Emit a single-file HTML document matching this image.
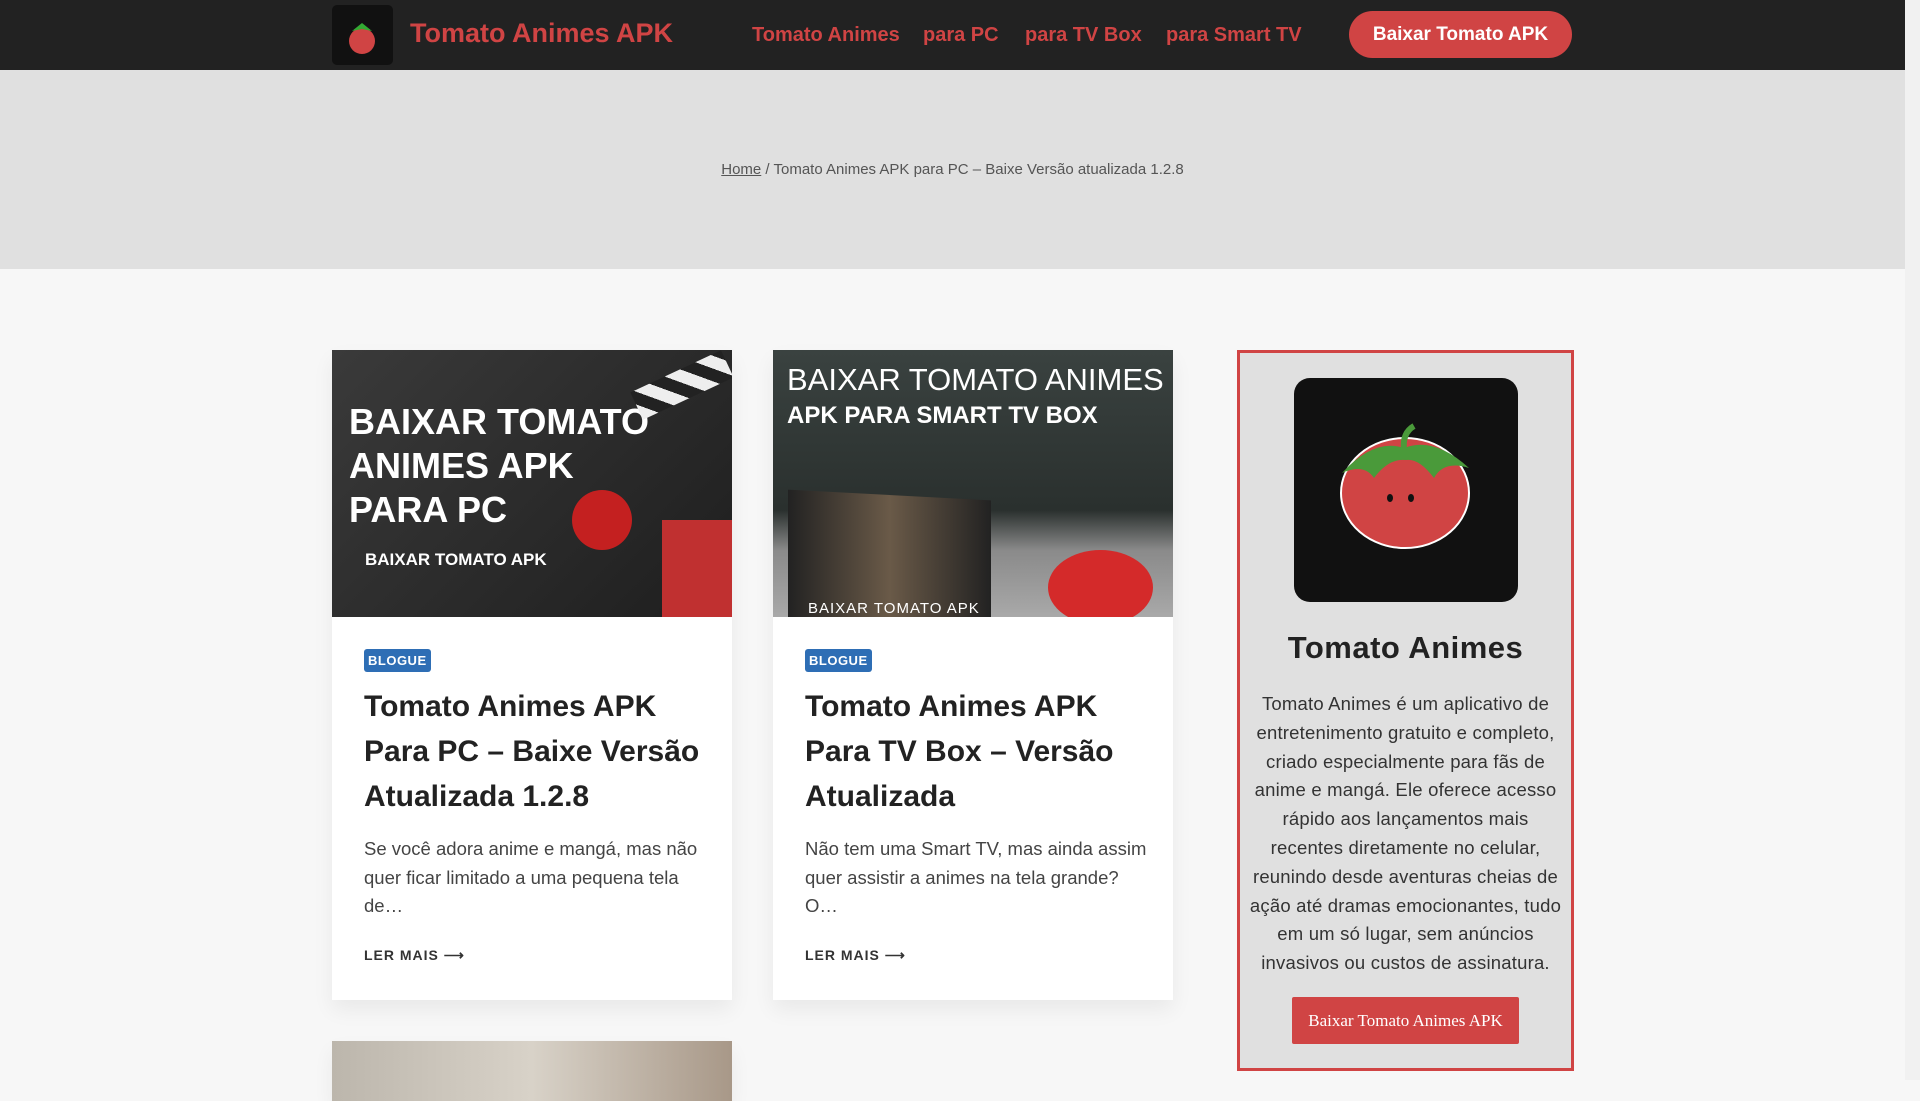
<!DOCTYPE html>
<html><head><meta charset="utf-8"><style>
*{margin:0;padding:0;box-sizing:border-box}
body{width:1920px;height:1080px;overflow:hidden;background:#f7f7f7;font-family:"Liberation Sans",sans-serif;position:relative}
.hdr{position:absolute;left:0;top:0;width:1905px;height:70px;background:#222}
.logo{position:absolute;left:332px;top:5px;width:61px;height:60px;background:#111;border-radius:5px}
.brand{position:absolute;left:410px;top:18px;color:#d04444;font-size:27px;font-weight:bold}
.nav a{position:absolute;top:24px;color:#d04444;font-size:20px;font-weight:bold;text-decoration:none}
.btn{position:absolute;left:1349px;top:11px;width:223px;height:47px;background:#d04444;border-radius:24px;color:#fff;font-size:19px;font-weight:bold;text-align:center;line-height:47px}
.hero{position:absolute;left:0;top:70px;width:1905px;height:199px;background:#e0e0e0;text-align:center;font-size:15px;color:#555;line-height:199px}
.hero a{color:#555}
.scroll{position:absolute;left:1905px;top:0;width:15px;height:1080px;background:#f1f1f1}
.thumb{position:absolute;left:1907px;top:0;width:11px;height:535px;background:#c1c1c1;border-radius:6px}
.card{position:absolute;top:350px;width:400px;height:650px;background:#fff;box-shadow:0 10px 20px rgba(0,0,0,.06)}
.img{height:267px;position:relative;overflow:hidden}
.badge{position:absolute;left:32px;top:299px;background:#2e6eb5;color:#fff;font-size:13px;font-weight:bold;padding:4px 4px;border-radius:3px;letter-spacing:.5px}
.t{position:absolute;left:32px;top:334px;width:345px;font-size:30px;font-weight:bold;line-height:45px;color:#222}
.ex{position:absolute;left:32px;top:485px;width:345px;font-size:18.5px;line-height:28.5px;color:#444}
.lm{position:absolute;left:32px;top:597px;font-size:14px;font-weight:bold;color:#333;letter-spacing:1px}
.side{position:absolute;left:1237px;top:350px;width:337px;height:721px;background:#e0e0e0;border:3px solid #d04444;text-align:center}
.icon{position:absolute;left:54px;top:25px;width:224px;height:224px;background:#111;border-radius:16px}
.st{position:absolute;left:0;width:331px;top:277px;font-size:31px;font-weight:bold;color:#222;letter-spacing:.5px}
.sp{position:absolute;left:6px;width:319px;top:337px;font-size:18.5px;line-height:28.8px;color:#333;letter-spacing:.2px}
.sb{position:absolute;left:52px;top:644px;width:227px;height:47px;background:#d04444;color:#fff;font-family:"Liberation Serif",serif;font-size:17px;line-height:47px;border-radius:2px}
.w{color:#fff;font-weight:bold;position:absolute}
</style></head><body>
<div class="hdr">
<div class="logo"><svg width="61" height="60" viewBox="0 0 61 60"><ellipse cx="30" cy="36" rx="13" ry="13" fill="#d04444"/><path d="M20 26 L30 18 L40 26 L30 24Z" fill="#3a3"/></svg></div>
<div class="brand">Tomato Animes APK</div>
<div class="nav"><a style="left:752px">Tomato Animes</a><a style="left:923px">para PC</a><a style="left:1025px">para TV Box</a><a style="left:1166px">para Smart TV</a></div>
<div class="btn">Baixar Tomato APK</div>
</div>
<div class="hero"><a href="#">Home</a> / Tomato Animes APK para PC – Baixe Versão atualizada 1.2.8</div>
<div class="scroll"><div class="thumb"></div></div>

<div class="card" style="left:332px">
<div class="img" style="background:linear-gradient(135deg,#3a3a3a,#1e1e1e)">
<div class="w" style="left:17px;top:50px;font-size:36px;line-height:44px;font-family:'Liberation Sans Narrow','Liberation Sans',sans-serif">BAIXAR TOMATO<br>ANIMES APK<br>PARA PC</div>
<div class="w" style="left:33px;top:200px;font-size:17px">BAIXAR TOMATO APK</div>
<div style="position:absolute;left:240px;top:140px;width:60px;height:60px;border-radius:50%;background:#c42020"></div>
<div style="position:absolute;left:330px;top:170px;width:70px;height:100px;background:#c03030"></div>
<div style="position:absolute;left:300px;top:20px;width:100px;height:30px;background:repeating-linear-gradient(45deg,#eee 0 12px,#222 12px 24px);transform:rotate(-25deg)"></div>
</div>
<div class="badge">BLOGUE</div>
<div class="t">Tomato Animes APK Para PC – Baixe Versão Atualizada 1.2.8</div>
<div class="ex">Se você adora anime e mangá, mas não quer ficar limitado a uma pequena tela de…</div>
<div class="lm">LER MAIS ⟶</div>
</div>

<div class="card" style="left:773px">
<div class="img" style="background:linear-gradient(180deg,#3a4240 0%,#2a302e 60%,#8a8a8a 75%,#a9a9a9 100%)">
<div class="w" style="left:14px;top:12px;font-size:31px;font-weight:normal;color:#fff">BAIXAR TOMATO ANIMES</div>
<div class="w" style="left:14px;top:52px;font-size:24px">APK PARA SMART TV BOX</div>
<div style="position:absolute;left:15px;top:145px;width:203px;height:225px;background:linear-gradient(90deg,#222,#6a5a48 50%,#222);transform:skewY(3deg)"></div>
<div class="w" style="left:35px;top:250px;font-size:15px;font-weight:normal;letter-spacing:1px">BAIXAR TOMATO APK</div>
<div style="position:absolute;left:275px;top:200px;width:105px;height:75px;border-radius:50%;background:#d42a2a"></div>
</div>
<div class="badge">BLOGUE</div>
<div class="t">Tomato Animes APK Para TV Box – Versão Atualizada</div>
<div class="ex">Não tem uma Smart TV, mas ainda assim quer assistir a animes na tela grande? O…</div>
<div class="lm">LER MAIS ⟶</div>
</div>

<div class="card" style="left:332px;top:1041px;height:60px"><div style="height:60px;background:linear-gradient(90deg,#bcb6ac,#d8d2c8 50%,#a89888)"></div></div>

<div class="side">
<div class="icon"><svg width="224" height="224" viewBox="0 0 224 224"><ellipse cx="111" cy="115" rx="64" ry="55" fill="#d04444" stroke="#fff" stroke-width="2"/><path d="M48 95 Q80 60 110 70 Q140 58 175 90 Q150 82 140 100 Q125 80 112 82 Q95 80 80 100 Q70 85 48 95Z" fill="#4a9a3a"/><path d="M110 72 Q108 55 120 48" stroke="#4a9a3a" stroke-width="6" fill="none"/><ellipse cx="96" cy="120" rx="3" ry="4" fill="#111"/><ellipse cx="117" cy="120" rx="3" ry="4" fill="#111"/></svg></div>
<div class="st">Tomato Animes</div>
<div class="sp">Tomato Animes é um aplicativo de entretenimento gratuito e completo, criado especialmente para fãs de anime e mangá. Ele oferece acesso rápido aos lançamentos mais recentes diretamente no celular, reunindo desde aventuras cheias de ação até dramas emocionantes, tudo em um só lugar, sem anúncios invasivos ou custos de assinatura.</div>
<div class="sb">Baixar Tomato Animes APK</div>
</div>
</body></html>
